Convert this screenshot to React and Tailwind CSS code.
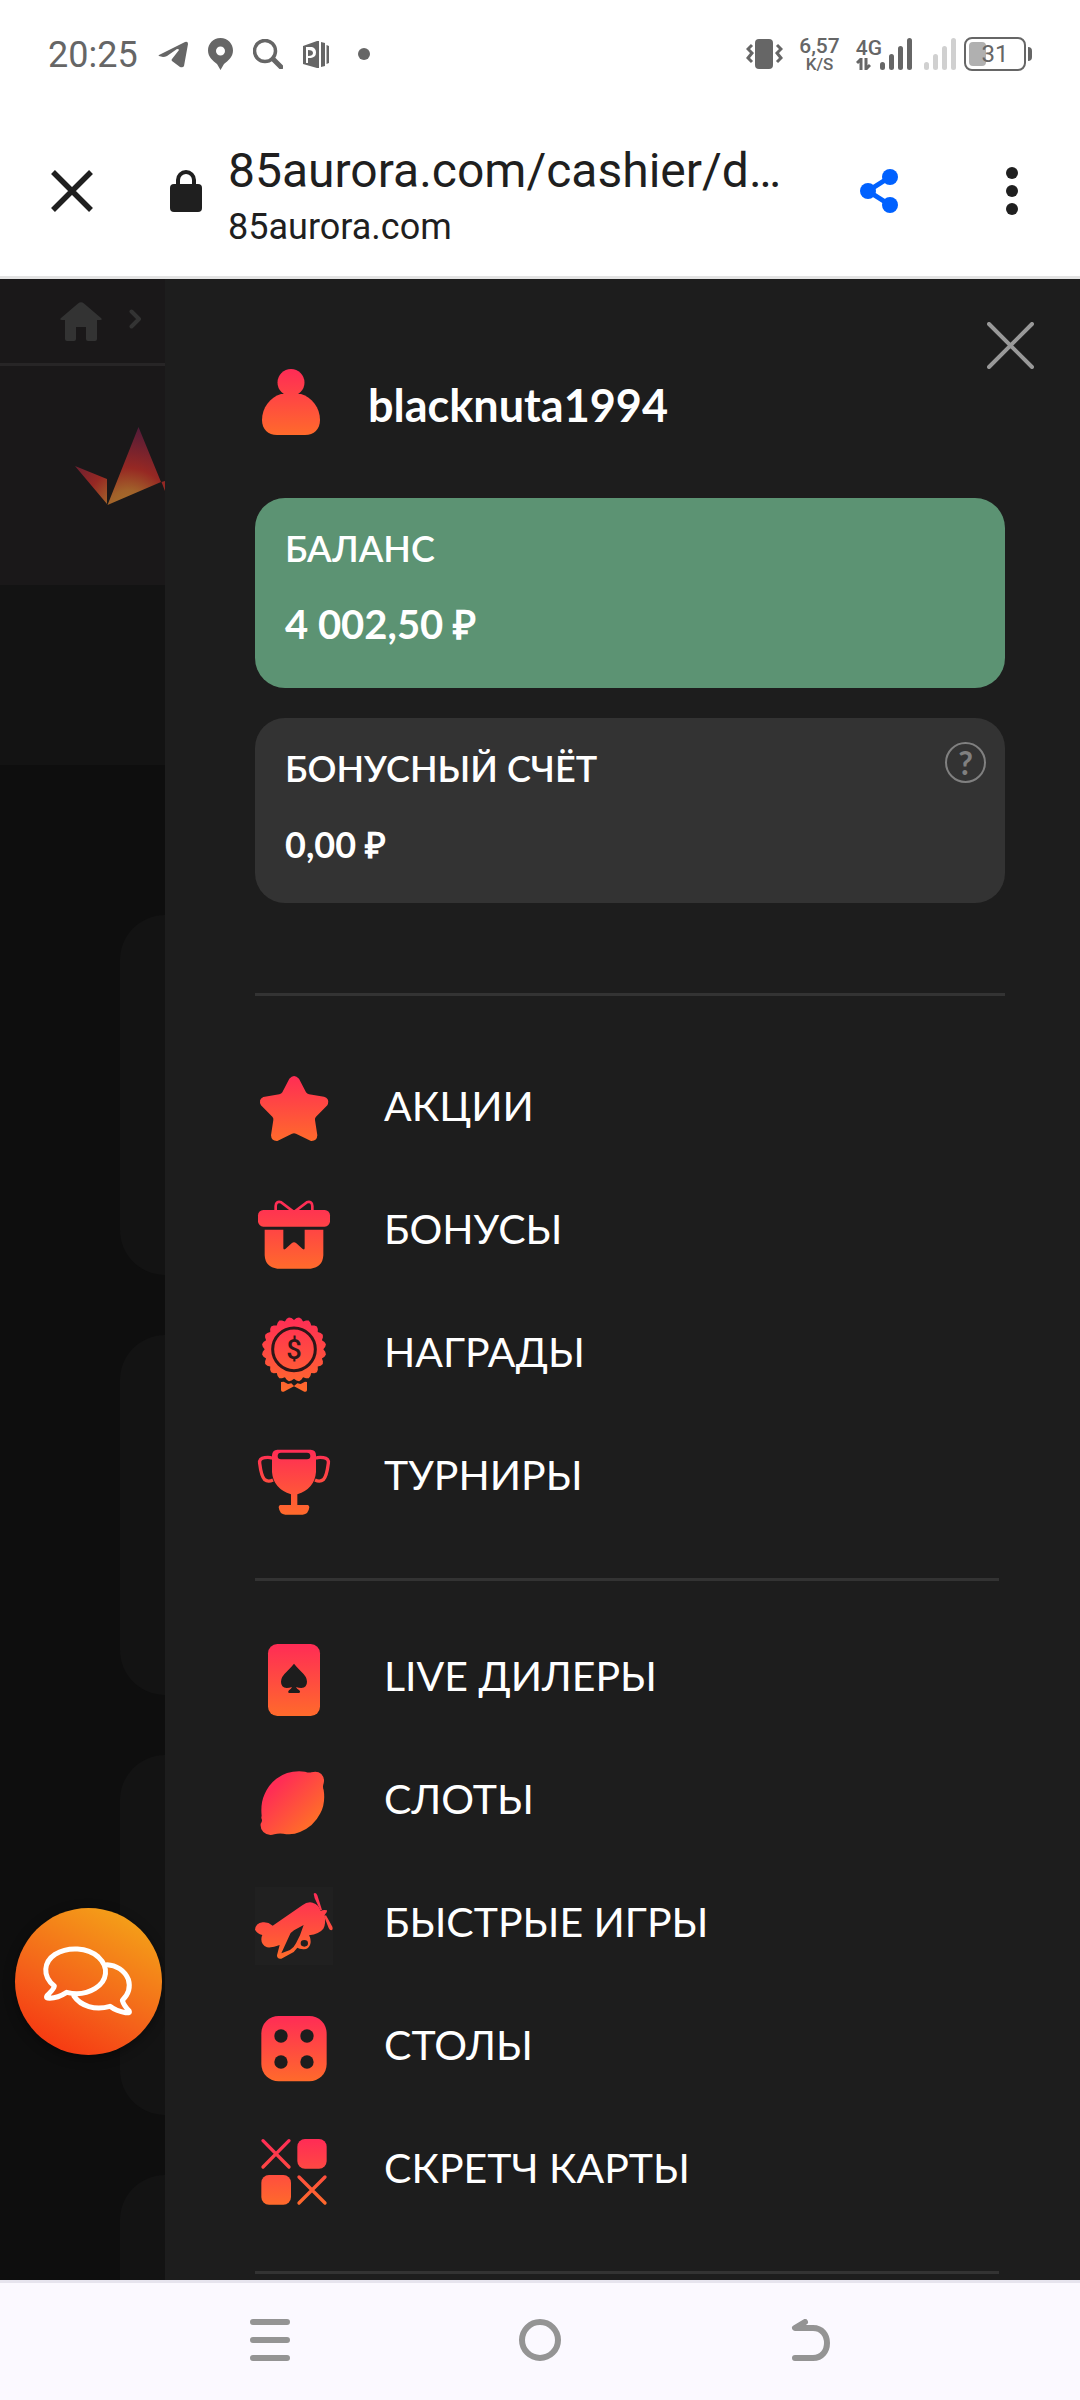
import React from "react";

const teeth = Array.from({ length: 80 }, (_, i) => {
  const a = ((i * 4.5 - 90 + 9) * Math.PI) / 180;
  const phase = i % 4;
  const r = phase === 0 ? 97 : phase === 2 ? 88 : 94;
  return `${(162 + r * Math.cos(a)).toFixed(1)},${(178 + r * Math.sin(a)).toFixed(1)}`;
}).join(" ");

function Icon({ id, viewBox, from, to, horizontal, children }) {
  return (
    <svg viewBox={viewBox} className="size-[78px] shrink-0" aria-hidden="true">
      <defs>
        <linearGradient
          id={id}
          gradientUnits="userSpaceOnUse"
          x1={horizontal ? 105 : 162}
          y1={from}
          x2={horizontal ? 210 : 162}
          y2={to}
        >
          <stop offset="0" stopColor="#ff2d55" />
          <stop offset="1" stopColor="#ff6a2b" />
        </linearGradient>
      </defs>
      {children}
    </svg>
  );
}

const StarIcon = () => (
  <Icon id="g-star" viewBox="45 63 234 234" from={78} to={273}>
    <path
      fill="url(#g-star)"
      d="M148 86 Q162 70 177 86 L198 127 Q201 132 207 133 L252 140 Q268 145 264 161 L262 166 L228 200 Q224 204 225 210 L232 256 Q231 274 213 273 L168 251 Q162 248 156 251 L112 273 Q94 274 93 256 L100 210 Q101 204 97 200 L63 166 Q54 148 70 141 L118 133 Q124 132 127 127 Z"
    />
  </Icon>
);

const GiftIcon = () => (
  <Icon id="g-gift" viewBox="45 432 234 234" from={460} to={656}>
    <path
      d="M107 484 V468 Q108 452 124 457 L162 486 L200 457 Q216 452 217 468 V484"
      fill="none"
      stroke="url(#g-gift)"
      strokeWidth="8"
    />
    <rect x="54" y="480" width="216" height="50" rx="16" fill="url(#g-gift)" />
    <path
      fill="url(#g-gift)"
      d="M74 539 H130 V594 Q130 601 136 597 L155 580 Q162 574 169 580 L188 597 Q194 601 194 594 V539 H250 V616 Q248 652 212 656 H112 Q76 652 74 616 Z"
    />
  </Icon>
);

const AwardIcon = () => (
  <Icon id="g-award" viewBox="45 81 234 234" from={85} to={300}>
    <path d="M123 276 L131 275 L144 282 L154 280 L162 288 L172 280 L182 282 L195 275 L201 276 V301 Q199 307 193 305 L162 289 L131 305 Q125 307 123 301 Z" fill="url(#g-award)" />
    <polygon points={teeth} fill="url(#g-award)" />
    <circle cx="162" cy="178" r="64" fill="none" stroke="#2b1718" strokeWidth="9" />
    <text x="162" y="207" textAnchor="middle" fontSize="82" fontWeight="500" fontFamily="Roboto, sans-serif" fill="#2b1718">
      $
    </text>
  </Icon>
);

const TrophyIcon = () => (
  <Icon id="g-trophy" viewBox="45 450 234 234" from={482} to={674}>
    <path
      fill="url(#g-trophy)"
      fillRule="evenodd"
      d="M112 479 H212 Q228 480 228 496 V546 Q224 596 172 613 V645 H203 Q208 646 208 652 Q205 674 188 674 H136 Q119 674 116 652 Q116 646 121 645 H153 V613 Q100 596 96 546 V496 Q97 480 112 479 Z M123 488 A10 10 0 0 0 123 508 H201 A10 10 0 0 0 201 488 Z"
    />
    <path
      d="M97 505 Q90 501 74 503 Q57 505 59 520 Q64 560 74 569 Q84 577 99 570 M227 505 Q234 501 250 503 Q267 505 265 520 Q260 560 250 569 Q240 577 225 570"
      fill="none"
      stroke="url(#g-trophy)"
      strokeWidth="10"
    />
  </Icon>
);

const CardIcon = () => (
  <Icon id="g-card" viewBox="45 63 234 234" from={76} to={288}>
    <rect x="84" y="72" width="156" height="216" rx="28" fill="url(#g-card)" />
    <path
      fill="#1d1d1d"
      d="M162 131 Q169 140 184 155 Q201 170 201 185 Q201 203 184 204 Q176 204 168 201 Q170 207 178 211 Q183 217 177 219 H147 Q142 217 147 211 Q154 207 156 201 Q148 204 140 204 Q123 203 123 185 Q123 170 140 155 Q155 140 162 131 Z"
    />
  </Icon>
);

const LemonIcon = () => (
  <Icon id="g-lemon" viewBox="45 432 234 234" from={497} to={605} horizontal>
    <path
      fill="url(#g-lemon)"
      d="M65 597 Q63 592 65 588 Q61 550 74 522 Q86 494 109 476 Q146 449 195 455 Q207 459 214 457 Q232 451 244 462 Q255 474 251 490 Q247 501 251 510 Q257 550 241 580 Q221 620 180 636 Q157 646 130 641 Q115 639 103 643 Q84 649 70 636 Q60 626 62 611 Q68 604 65 597 Z"
    />
  </Icon>
);

const PlaneIcon = () => (
  <Icon id="g-plane" viewBox="45 81 234 234" from={105} to={290}>
    <rect x="45" y="81" width="234" height="234" fill="#202020" />
    <path
      fill="url(#g-plane)"
      fillRule="evenodd"
      d="M45 209 Q47 190 68 187 Q84 185 98 197 L187 136 Q202 124 218 128 Q237 134 242 153 Q250 148 261 151 Q262 158 256 162 L254 165 Q258 195 250 206 Q238 222 207 226 Q214 237 211 252 Q206 269 190 268 Q177 267 172 263 Q163 277 150 282 L124 296 Q111 298 111 286 L119 255 Q98 264 81 262 Q64 255 64 238 Q64 230 67 225 Q51 220 45 209 Z M191 195 L162 211 Q152 217 148 227 L124 280 L150 270 Q162 263 168 250 L180 226 Z M193 240 A11 10 0 1 0 193 260 A11 10 0 1 0 193 240 Z"
    />
    <path fill="url(#g-plane)" d="M221 101 Q227 96 232 106 L246 150 L241 151 L224 115 Z M252 168 L258 166 L277 200 Q280 210 274 211 Q269 211 266 204 Z" />
  </Icon>
);

const DiceIcon = () => (
  <Icon id="g-dice" viewBox="45 450 234 234" from={472} to={664}>
    <rect x="64" y="468" width="196" height="196" rx="52" fill="url(#g-dice)" />
    {[[123, 528], [201, 528], [123, 606], [201, 606]].map(([x, y]) => (
      <circle key={`${x}-${y}`} cx={x} cy={y} r="20" fill="#1d1d1d" />
    ))}
  </Icon>
);

const ScratchIcon = () => (
  <Icon id="g-scratch" viewBox="45 819 234 234" from={842} to={1034}>
    <rect x="172" y="837" width="88" height="89" rx="23" fill="url(#g-scratch)" />
    <rect x="64" y="945" width="89" height="89" rx="23" fill="url(#g-scratch)" />
    <path
      d="M69 842 L147 921 M147 842 L69 921 M177 951 L255 1029 M255 951 L177 1029"
      stroke="url(#g-scratch)"
      strokeWidth="10"
      strokeLinecap="round"
    />
  </Icon>
);

const UserIcon = () => (
  <svg viewBox="0 0 58 66" className="h-[66px] w-[58px]" aria-hidden="true">
    <defs>
      <linearGradient id="g-user" gradientUnits="userSpaceOnUse" x1="29" y1="2" x2="29" y2="66">
        <stop offset="0" stopColor="#ff2d55" />
        <stop offset="1" stopColor="#ff6a2b" />
      </linearGradient>
    </defs>
    <circle cx="29" cy="13.5" r="13.5" fill="url(#g-user)" />
    <path fill="url(#g-user)" d="M19 25 H39 C50 28 58 39 58 51 C58 60 52 66 43 66 H15 C6 66 0 60 0 51 C0 39 8 28 19 25 Z" />
  </svg>
);

const groups = [
  [
    ["АКЦИИ", StarIcon],
    ["БОНУСЫ", GiftIcon],
    ["НАГРАДЫ", AwardIcon],
    ["ТУРНИРЫ", TrophyIcon],
  ],
  [
    ["LIVE ДИЛЕРЫ", CardIcon],
    ["СЛОТЫ", LemonIcon],
    ["БЫСТРЫЕ ИГРЫ", PlaneIcon],
    ["СТОЛЫ", DiceIcon],
    ["СКРЕТЧ КАРТЫ", ScratchIcon],
  ],
];

function Bars({ className }) {
  return (
    <svg viewBox="0 0 32 32" className={`size-8 ${className}`} aria-hidden="true">
      <rect x="0" y="24" width="5" height="8" rx="2.5" />
      <rect x="9" y="16" width="5" height="16" rx="2.5" />
      <rect x="18" y="8" width="5" height="24" rx="2.5" />
      <rect x="27" y="0" width="5" height="32" rx="2.5" />
    </svg>
  );
}

function StatusBar() {
  return (
    <div className="flex h-[108px] items-center justify-between px-12 text-[#666666]">
      <div className="flex items-center">
        <span className="pt-0.5 text-4xl">20:25</span>
        <svg viewBox="0 0 30 27" className="ml-5 h-[27px] w-[30px]" fill="#666" aria-hidden="true">
          <path d="M1 14 L27 1 Q30 0 30 3 L26 25 Q25 27 22 26 L14 20 Q13 19 14 18 L21 9 Q21 8 19 8 L9 15 Q7 16 5 16 L1 15 Q0 14.500 1 14 Z" />
        </svg>
        <svg viewBox="0 0 25 32" className="ml-5 h-8 w-[25px]" aria-hidden="true">
          <path fill="#666" fillRule="evenodd" d="M12.500 0 C20 0 25 6 25 12.500 C25 19 20 23 16 26 L12.500 32 L9 26 C5 23 0 19 0 12.500 C0 6 5 0 12.500 0 Z M12.500 8.500 A4.500 4.500 0 1 0 12.500 17.500 A4.500 4.500 0 1 0 12.500 8.500 Z" />
        </svg>
        <svg viewBox="0 0 30 30" className="ml-5 size-[30px]" fill="none" stroke="#666" aria-hidden="true">
          <circle cx="12" cy="12" r="10.500" strokeWidth="3.500" />
          <path d="M20 20 L28 28" strokeWidth="5" strokeLinecap="round" />
        </svg>
        <svg viewBox="0 0 26 27" className="ml-5 h-[27px] w-[26px]" aria-hidden="true">
          <path fill="#666" fillRule="evenodd" d="M0 5 L14 0 H16 V27 H14 L0 23 V22 H3 V6 H0 Z M3 6 V22 H5 V17 H8 Q13 16 13 11.500 Q13 7 9 6 Z" />
          <path fill="#666" d="M0 5 H3 V22 H0 Z M5 9 Q10 9 10 12 Q10 15 5 15 Z M18 1 L22 2 V25 L18 26 Z M23.500 4 L26 5 V22 L23.500 23 Z" />
        </svg>
        <span className="ml-[29px] size-3 rounded-full bg-[#666666]" />
      </div>
      <div className="flex items-center">
        <svg viewBox="0 0 37 30" className="h-[30px] w-[37px]" aria-hidden="true">
          <rect x="9" y="0" width="18" height="30" rx="4" fill="#666" />
          <path d="M6 6 L2 10 L6 14 L2 19 L6 23 M31 6 L35 10 L31 14 L35 19 L31 23" fill="none" stroke="#666" strokeWidth="3" />
        </svg>
        <div className="ml-4 flex flex-col items-center font-medium">
          <span className="text-[21px] leading-5">6,57</span>
          <span className="text-[17px] leading-4">K/S</span>
        </div>
        <div className="ml-4 flex items-center">
          <div className="flex flex-col items-start font-medium">
            <span className="text-[21px] leading-5">4G</span>
            <svg viewBox="0 0 15 12" className="h-3 w-[15px]" fill="none" stroke="#666" strokeWidth="3" aria-hidden="true">
              <path d="M5 12 V1 L1 5 M10 0 V11 L14 7" />
            </svg>
          </div>
          <Bars className="-ml-0.5 fill-[#666666]" />
          <Bars className="ml-3 fill-[#d0d0d0]" />
        </div>
        <div className="ml-2 flex items-center gap-0.5">
          <div className="relative flex h-[34px] w-[62px] items-center rounded-lg border-2 border-[#666666] p-[3px]">
            <div className="h-6 w-[17px] rounded-sm bg-[#b0b0b0]" />
            <span className="absolute inset-x-0 text-center text-2xl leading-6">31</span>
          </div>
          <div className="h-3.5 w-1 rounded-r-full bg-[#666666]" />
        </div>
      </div>
    </div>
  );
}

function BrowserBar() {
  return (
    <div className="flex h-[171px] items-center border-b-[3px] border-[#e3e3e3] pr-[46px] pb-0.5 pl-[51px] text-[#1f1f1f]">
      <button type="button" aria-label="Закрыть вкладку">
        <svg viewBox="0 0 42 42" className="size-[42px]" stroke="#1f1f1f" strokeWidth="5.500" aria-hidden="true">
          <path d="M2 2 L40 40 M40 2 L2 40" />
        </svg>
      </button>
      <svg viewBox="0 0 32 42" className="ml-[77px] h-[42px] w-8" aria-hidden="true">
        <rect x="0" y="14" width="32" height="28" rx="4" fill="#1f1f1f" />
        <path d="M8 16 V10 A8 8 0 0 1 24 10 V16" fill="none" stroke="#1f1f1f" strokeWidth="4" />
      </svg>
      <div className="ml-[26px] flex min-w-0 flex-1 flex-col pt-4">
        <span className="text-5xl leading-14">85aurora.com/cashier/d…</span>
        <span className="text-4xl leading-14">85aurora.com</span>
      </div>
      <button type="button" aria-label="Поделиться">
        <svg viewBox="0 0 38 44" className="h-11 w-[38px]" aria-hidden="true">
          <path d="M30 8 L8 22 L30 36" fill="none" stroke="#0061ff" strokeWidth="5" />
          <circle cx="30" cy="8" r="8" fill="#0061ff" />
          <circle cx="8" cy="22" r="8" fill="#0061ff" />
          <circle cx="30" cy="36" r="8" fill="#0061ff" />
        </svg>
      </button>
      <button type="button" aria-label="Меню" className="ml-[92px] flex w-11 flex-col items-center gap-1.5">
        <span className="size-3 rounded-full bg-[#1f1f1f]" />
        <span className="size-3 rounded-full bg-[#1f1f1f]" />
        <span className="size-3 rounded-full bg-[#1f1f1f]" />
      </button>
    </div>
  );
}

function Backdrop() {
  return (
    <div className="relative flex w-[165px] shrink-0 flex-col bg-[#0e0e0e]">
      <div className="flex h-[87px] items-center gap-[27px] border-b-[3px] border-[#272526] bg-[#1a1819] pl-[60px]">
        <svg viewBox="0 0 42 39" className="h-[39px] w-[42px]" fill="#333" aria-hidden="true">
          <path d="M18 1.500 Q21 -1 24 1.500 L41 16 Q43 18 40 18 H37 V37 Q37 39 35 39 H28 Q26 39 26 37 V25 H16 V37 Q16 39 14 39 H7 Q5 39 5 37 V18 H2 Q-1 18 1 16 Z" />
        </svg>
        <svg viewBox="0 0 13 20" className="-mt-1 h-5 w-[13px]" fill="none" stroke="#333" strokeWidth="4" strokeLinecap="round" strokeLinejoin="round" aria-hidden="true">
          <path d="M2.500 2.500 L10 10 L2.500 17.500" />
        </svg>
      </div>
      <div className="flex h-[219px] justify-end bg-[#1a1819] pt-[61px]">
        <svg viewBox="75 427 90 78" className="h-[78px] w-[90px]" aria-hidden="true">
          <defs>
            <radialGradient id="g-logo" gradientUnits="userSpaceOnUse" cx="128" cy="512" r="88">
              <stop offset="0" stopColor="#a9762c" />
              <stop offset="0.250" stopColor="#a1612a" />
              <stop offset="0.500" stopColor="#962823" />
              <stop offset="1" stopColor="#4d1a3a" />
            </radialGradient>
          </defs>
          <path fill="url(#g-logo)" d="M75 466 L107 479 V504 Z M138.500 427 L161 482 L107.500 505 Z M161.500 482 L165 481 V491 Z" />
        </svg>
      </div>
      <div className="h-[180px] bg-[#131313]" />
      <div className="flex flex-1 flex-col gap-[60px] pt-[150px] pl-[120px]">
        <div className="h-[360px] rounded-l-[45px] bg-[#131313]" />
        <div className="h-[360px] rounded-l-[45px] bg-[#131313]" />
        <div className="h-[360px] rounded-l-[45px] bg-[#131313]" />
        <div className="min-h-[105px] flex-1 rounded-tl-[45px] bg-[#131313]" />
      </div>
      <button
        type="button"
        aria-label="Чат"
        className="absolute bottom-[225px] left-[15px] size-[147px] rounded-full bg-[linear-gradient(28deg,#f63a12_12%,#f4601a_40%,#f4a118_90%)] shadow-[0_3px_12px_rgba(0,0,0,0.4)]"
      >
        <svg viewBox="45 84 441 441" className="size-full" fill="none" stroke="#fff" strokeWidth="15" strokeLinejoin="round" strokeLinecap="round" aria-hidden="true">
          <path d="M163 318 C125 287 132 245 165 223 C205 199 262 202 295 231 C328 262 322 303 286 325 C260 341 227 344 200 337 C180 350 160 356 142 354 C137 352 140 347 148 340 C155 333 162 325 163 318 Z" />
          <path d="M321 254 C348 255 374 271 385 298 C393 325 385 344 367 361 C370 372 377 382 387 392 C391 400 385 399 377 398 C358 395 344 390 330 379 C285 392 242 378 222 348" />
        </svg>
      </button>
    </div>
  );
}

function Drawer() {
  return (
    <aside className="relative min-w-0 flex-1 bg-[#1d1d1d] pt-[90px] pr-[75px] pb-1.5 pl-[90px] font-[Lato,'Open_Sans',sans-serif] text-white">
      <button type="button" aria-label="Закрыть меню" className="absolute top-[43px] right-[46px]">
        <svg viewBox="0 0 47 47" className="size-[47px]" stroke="#999" strokeWidth="4" strokeLinecap="round" aria-hidden="true">
          <path d="M2 2 L45 45 M45 2 L2 45" />
        </svg>
      </button>
      <div className="flex h-[66px] items-center gap-12 pl-[7px]">
        <UserIcon />
        <span className="pt-1.5 text-[45px] leading-[66px] font-bold">blacknuta1994</span>
      </div>
      <section className="mt-[63px] h-[190px] rounded-[30px] bg-[#5c9373] px-[30px] pt-[22px]">
        <h2 className="text-4xl leading-14 font-semibold">БАЛАНС</h2>
        <p className="mt-4 text-[40px] leading-16 font-bold">4 002,50 ₽</p>
      </section>
      <section className="relative mt-[30px] h-[185px] rounded-[30px] bg-[#333333] px-[30px] pt-[22px]">
        <h2 className="text-4xl leading-14 font-semibold">БОНУСНЫЙ СЧЁТ</h2>
        <p className="mt-4 text-4xl leading-16 font-bold">0,00 ₽</p>
        <button
          type="button"
          aria-label="Справка"
          className="absolute top-6 right-[19px] flex size-[41px] items-center justify-center rounded-full border-2 border-[#808080] text-[32px] leading-8 font-bold text-[#808080]"
        >
          ?
        </button>
      </section>
      <hr className="mt-[90px] mb-[75px] border-t-[3px] border-[#333333]" />
      {groups.map((items, index) => (
        <nav key={index} className="mr-1.5">
          <ul className="flex flex-col gap-[45px]">
            {items.map(([label, Glyph]) => (
              <li key={label}>
                <a href="#" className="flex items-center gap-[51px]">
                  <Glyph />
                  <span className="pb-2 text-[41px] leading-14">{label}</span>
                </a>
              </li>
            ))}
          </ul>
          <hr className={`mt-[60px] border-t-[3px] border-[#333333] ${index === 0 ? "mb-[60px]" : ""}`} />
        </nav>
      ))}
    </aside>
  );
}

function NavBar() {
  return (
    <div className="flex h-[120px] items-center border-t-[3px] border-[#e6e4ee] bg-[#fbf9ff] px-[135px] pb-1">
      <button type="button" aria-label="Недавние" className="flex flex-1 justify-center">
        <svg viewBox="0 0 42 42" className="size-[42px]" stroke="#949494" strokeWidth="6" strokeLinecap="round" aria-hidden="true">
          <path d="M4 3 H38 M4 21 H38 M4 39 H38" />
        </svg>
      </button>
      <button type="button" aria-label="Домой" className="flex flex-1 justify-center">
        <span className="size-[42px] rounded-full border-[6px] border-[#949494]" />
      </button>
      <button type="button" aria-label="Назад" className="flex flex-1 justify-center">
        <svg viewBox="0 0 42 42" className="size-[42px]" fill="none" stroke="#949494" strokeWidth="6" strokeLinecap="round" strokeLinejoin="round" aria-hidden="true">
          <path d="M16 3 L6 9 H24 C33 9 38 16 38 24 C38 32 33 39 24 39 H6" />
        </svg>
      </button>
    </div>
  );
}

export default function App() {
  return (
    <div className="flex min-h-screen flex-col bg-white font-[Roboto,sans-serif]">
      <header>
        <StatusBar />
        <BrowserBar />
      </header>
      <main className="flex flex-1">
        <Backdrop />
        <Drawer />
      </main>
      <NavBar />
    </div>
  );
}
